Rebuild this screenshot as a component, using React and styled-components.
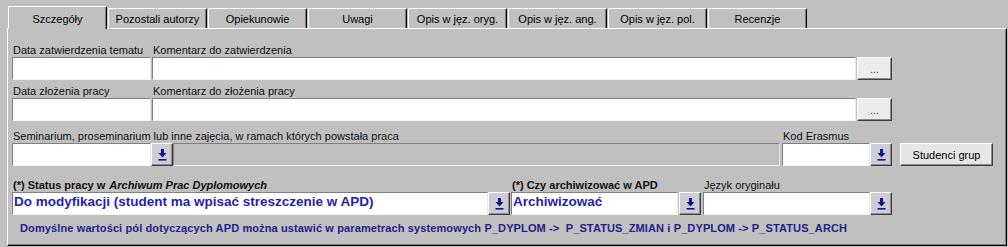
import React from "react";
import styled, { createGlobalStyle } from "styled-components";

const GlobalStyle = createGlobalStyle`
  html, body { margin: 0; padding: 0; background: #c0c0c0; }
  body { font-family: "Liberation Sans", Arial, sans-serif; font-size: 11px; color: #000; }
  #root { width: 1008px; height: 247px; overflow: hidden; }
`;

const Page = styled.div`
  box-sizing: border-box;
  width: 1008px;
  height: 247px;
  padding: 6px 0 0 7px;
  background: #c0c0c0;
`;

const TabStrip = styled.div`
  display: flex;
  align-items: flex-end;
  gap: 1px;
  height: 22px;
  padding-left: 1px;
  position: relative;
  z-index: 1;
`;

const Tab = styled.div`
  box-sizing: border-box;
  width: 99px;
  height: ${(p) => (p.$active ? 23 : 20)}px;
  margin-bottom: ${(p) => (p.$active ? -1 : 0)}px;
  padding-top: ${(p) => (p.$active ? 6 : 4)}px;
  background: #c0c0c0;
  border-top: 1px solid #fff;
  border-left: 1px solid #fff;
  border-right: 1px solid #000;
  border-top-left-radius: 2px;
  border-top-right-radius: 2px;
  box-shadow: inset -1px 0 #808080;
  text-align: center;
  font-size: 11px;
  line-height: 13px;
  white-space: nowrap;
`;

const Panel = styled.div`
  box-sizing: border-box;
  width: 1000px;
  height: 218px;
  border: 1px solid;
  border-color: #fff #000 #000 #fff;
  box-shadow: inset -1px -1px #808080;
  padding: 15px 0 0 4px;
  display: flex;
  flex-direction: column;
`;

const Row = styled.div`
  display: flex;
  align-items: flex-end;
  gap: ${(p) => p.$gap || 0}px;
  margin-top: ${(p) => p.$mt || 0}px;
`;

const Field = styled.div`
  display: flex;
  flex-direction: column;
  margin-left: ${(p) => p.$ml || 0}px;
`;

const Label = styled.div`
  height: 13px;
  line-height: 13px;
  font-size: 11px;
  font-weight: ${(p) => (p.$bold ? "bold" : "normal")};
  white-space: nowrap;
  padding-left: 1px;
  color: #101010;
`;

const Italic = styled.span`
  font-style: italic;
  margin-left: 4px;
`;

const Controls = styled.div`
  display: flex;
  height: 23px;
  gap: ${(p) => p.$gap || 0}px;
`;

const TextBox = styled.div`
  box-sizing: border-box;
  width: ${(p) => p.$w}px;
  height: 100%;
  background: ${(p) => (p.$disabled ? "#c0c0c0" : "#fff")};
  border: 1px solid;
  border-color: #808080 #e8e8e8 #f4f4f4 #808080;
  padding-left: 1px;
  color: #1f1fb0;
  font-weight: bold;
  font-size: 13.5px;
  line-height: 18px;
  white-space: nowrap;
  overflow: hidden;
`;

const RaisedButton = styled.div`
  box-sizing: border-box;
  width: ${(p) => p.$w}px;
  height: 100%;
  background: ${(p) => p.$face || "#ececec"};
  border: 1px solid;
  border-color: #fff #404040 #404040 #fff;
  box-shadow: inset -1px -1px #8a8a8a;
  display: flex;
  align-items: center;
  justify-content: center;
  font-size: 11px;
  color: ${(p) => p.$color || "#000"};
  white-space: nowrap;
`;

const ButtonSlot = styled.div`
  display: flex;
  height: 23px;
  margin-left: ${(p) => p.$ml || 0}px;
`;

const Footer = styled.div`
  margin-top: 7px;
  padding-left: 8px;
  height: 13px;
  line-height: 13px;
  font-size: 11px;
  font-weight: bold;
  letter-spacing: 0.12px;
  color: #22228c;
  white-space: pre;
`;

const ArrowIcon = () => (
  <svg width="9" height="12" viewBox="0 0 9 12">
    <rect x="3" y="0" width="3" height="4.5" fill="#12129a" />
    <polygon points="0.5,4 8.5,4 4.5,8.5" fill="#12129a" />
    <rect x="0.5" y="10" width="8" height="1.6" fill="#12129a" />
  </svg>
);

const ArrowButton = () => (
  <RaisedButton $w={22} $face="#cdcdd6">
    <ArrowIcon />
  </RaisedButton>
);

const tabs = [
  "Szczegóły",
  "Pozostali autorzy",
  "Opiekunowie",
  "Uwagi",
  "Opis w jęz. oryg.",
  "Opis w jęz. ang.",
  "Opis w jęz. pol.",
  "Recenzje",
];

export default function App() {
  return (
    <>
      <GlobalStyle />
      <Page>
        <TabStrip>
          {tabs.map((t, i) => (
            <Tab key={t} $active={i === 0}>
              {t}
            </Tab>
          ))}
        </TabStrip>
        <Panel>
          <Row $gap={1}>
            <Field>
              <Label>Data zatwierdzenia tematu</Label>
              <Controls>
                <TextBox $w={139} />
              </Controls>
            </Field>
            <Field>
              <Label>Komentarz do zatwierdzenia</Label>
              <Controls $gap={1}>
                <TextBox $w={704} />
                <RaisedButton $w={35} $color="#444">...</RaisedButton>
              </Controls>
            </Field>
          </Row>

          <Row $gap={1} $mt={5}>
            <Field>
              <Label>Data złożenia pracy</Label>
              <Controls>
                <TextBox $w={139} />
              </Controls>
            </Field>
            <Field>
              <Label>Komentarz do złożenia pracy</Label>
              <Controls $gap={1}>
                <TextBox $w={704} />
                <RaisedButton $w={35} $color="#444">...</RaisedButton>
              </Controls>
            </Field>
          </Row>

          <Row $mt={9}>
            <Field>
              <Label>Seminarium, proseminarium lub inne zajęcia, w ramach których powstała praca</Label>
              <Controls>
                <TextBox $w={139} />
                <ArrowButton />
                <TextBox $w={607} $disabled />
              </Controls>
            </Field>
            <Field $ml={2}>
              <Label>Kod Erasmus</Label>
              <Controls>
                <TextBox $w={88} />
                <ArrowButton />
              </Controls>
            </Field>
            <ButtonSlot $ml={8}>
              <RaisedButton $w={93} $face="#e6e6e6">Studenci grup</RaisedButton>
            </ButtonSlot>
          </Row>

          <Row $mt={13}>
            <Field>
              <Label $bold>
                (*) Status pracy w<Italic>Archiwum Prac Dyplomowych</Italic>
              </Label>
              <Controls>
                <TextBox $w={476}>Do modyfikacji (student ma wpisać streszczenie w APD)</TextBox>
                <ArrowButton />
              </Controls>
            </Field>
            <Field $ml={1}>
              <Label $bold>(*) Czy archiwizować w APD</Label>
              <Controls $gap={1}>
                <TextBox $w={167}>Archiwizować</TextBox>
                <ArrowButton />
              </Controls>
            </Field>
            <Field $ml={2}>
              <Label>Język oryginału</Label>
              <Controls>
                <TextBox $w={167} />
                <ArrowButton />
              </Controls>
            </Field>
          </Row>

          <Footer>
            {"Domyślne wartości pól dotyczących APD można ustawić w parametrach systemowych P_DYPLOM ->  P_STATUS_ZMIAN i P_DYPLOM -> P_STATUS_ARCH"}
          </Footer>
        </Panel>
      </Page>
    </>
  );
}
